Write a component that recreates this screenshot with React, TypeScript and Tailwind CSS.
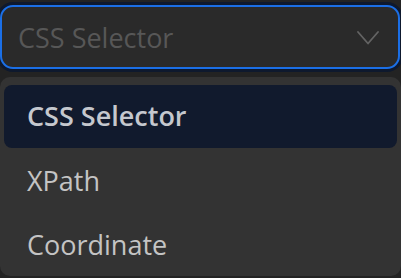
const options = ['CSS Selector', 'XPath', 'Coordinate'];

export default function App() {
  const selected = 0;
  return (
    <div
      className="h-[278px] w-[401px] overflow-hidden bg-[#232323] pt-[5px]"
      style={{ fontFamily: '"Open Sans", "Noto Sans", sans-serif' }}
    >
      {/* Trigger */}
      <button className="flex h-[64px] w-[400px] items-center justify-between rounded-[13px] border-2 border-[#1b6fe6] bg-[#2a2a2a] pl-[16px] pr-[19px] shadow-[0_0_0_3px_#0e192e]">
        <span className="text-[27px] leading-none text-[#575757]">CSS Selector</span>
        <svg width="22" height="14" viewBox="0 0 22 14" fill="none" className="mt-[2px]">
          <polyline points="1,1 11,12.5 21,1" stroke="#636363" strokeWidth="1.8" strokeLinecap="round" strokeLinejoin="round" />
        </svg>
      </button>

      {/* Dropdown */}
      <div className="mt-[8px] w-[401px] rounded-[10px] bg-[#333333] px-[4px] pt-[8px]">
        {options.map((opt, i) => (
          <div
            key={opt}
            className={
              i === selected
                ? 'flex h-[63px] items-center rounded-[8px] bg-[#111a2d] pl-[23px] text-[27px] font-semibold text-[#c5c8ce]'
                : 'flex h-[64px] items-center pl-[23px] pt-[2px] text-[27px] text-[#c4c4c4]'
            }
          >
            {opt}
          </div>
        ))}
      </div>
    </div>
  );
}
